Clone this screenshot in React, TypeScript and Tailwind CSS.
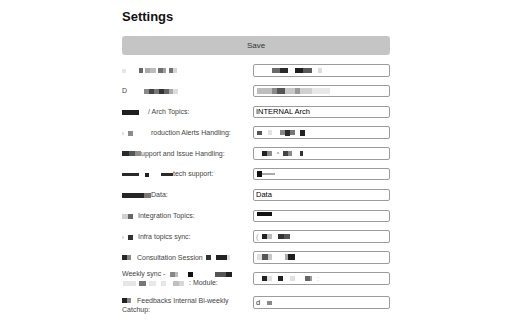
import React from "react";

type Seg = [number, number, string, number?];

// pixelated/redacted bits, given as absolute x ranges on the page
function Blots({ from, segs }: { from: number; segs: Seg[] }) {
  let x = from;
  return (
    <>
      {segs.map(([s, e, c, h], i) => {
        const ml = s - x;
        x = e;
        return (
          <span
            key={i}
            className="inline-block align-middle"
            style={{ width: e - s, height: h ?? 5, background: c, marginLeft: ml }}
          />
        );
      })}
    </>
  );
}

function Field({ className = "", children }: { className?: string; children?: React.ReactNode }) {
  return (
    <div
      className={
        "flex h-[12.5px] items-center overflow-hidden whitespace-nowrap rounded-[2px] border border-[#9c9c9c] bg-white pl-[2px] text-[7.5px] leading-none text-black " +
        className
      }
    >
      {children}
    </div>
  );
}

function Row({
  label,
  labelClass = "",
  fieldClass = "",
  children,
}: {
  label: React.ReactNode;
  labelClass?: string;
  fieldClass?: string;
  children?: React.ReactNode;
}) {
  return (
    <>
      <div className={"text-[7px] leading-[9.5px] text-[#444] " + labelClass}>{label}</div>
      <Field className={fieldClass}>{children}</Field>
    </>
  );
}

export default function App() {
  return (
    <div className="min-h-screen bg-white" style={{ fontFamily: '"Liberation Sans", Arial, sans-serif' }}>
      <div className="mx-auto w-[268px] pt-[9px]">
        <h1 className="text-[13px] font-bold leading-[15px] text-[#111]">Settings</h1>
        <button className="mt-[12px] flex h-[19px] w-full items-center justify-center rounded-[3px] bg-[#c5c5c5] text-[8px] font-normal text-[#333]">
          Save
        </button>
        <div className="mt-[9px] grid grid-cols-[120px_1fr] items-center gap-x-[11px] gap-y-[8.3px]">
          <Row
            label={
              <Blots
                from={121}
                segs={[
                  [121, 125, "#e6e6e6", 4],
                  [138, 142, "#666"],
                  [144, 149, "#aaa"],
                  [149, 155, "#bdbdbd"],
                  [157, 162, "#707070"],
                  [162, 165, "#a0a0a0"],
                  [168, 172, "#737373"],
                  [172, 176, "#d6d6d6"],
                ]}
              />
            }
          >
            <Blots
              from={254}
              segs={[
                [270, 278, "#6a6a6a"],
                [278, 286, "#2a2a2a"],
                [293, 301, "#1e1e1e"],
                [301, 310, "#5a5a5a"],
                [316, 320, "#dcdcdc"],
              ]}
            />
          </Row>
          <Row
            label={
              <>
                <span>D</span>
                <Blots
                  from={126}
                  segs={[
                    [143, 148, "#888"],
                    [148, 153, "#444"],
                    [153, 158, "#777"],
                    [158, 163, "#333"],
                    [163, 168, "#666"],
                    [168, 172, "#aaa"],
                    [172, 177, "#ddd"],
                  ]}
                />
              </>
            }
          >
            <Blots
              from={254}
              segs={[
                [255, 270, "#bdbdbd", 6],
                [270, 275, "#8a8a8a", 6],
                [275, 283, "#555", 6],
                [283, 293, "#c8c8c8", 6],
                [293, 298, "#999", 6],
                [298, 310, "#d0d0d0", 6],
                [310, 328, "#e8e8e8", 6],
              ]}
            />
          </Row>
          <Row
            label={
              <>
                <Blots from={121} segs={[[121, 138, "#1f1f1f"]]} />
                <span className="ml-[9px]">/ Arch Topics:</span>
              </>
            }
          >
            INTERNAL Arch
          </Row>
          <Row
            label={
              <>
                <Blots
                  from={121}
                  segs={[
                    [121, 123, "#e0e0e0", 3],
                    [127, 132, "#8c8c8c"],
                  ]}
                />
                <span className="ml-[18px]">roduction Alerts Handling:</span>
              </>
            }
          >
            <Blots
              from={254}
              segs={[
                [255, 260, "#555", 4],
                [266, 270, "#e2e2e2"],
                [278, 283, "#888"],
                [283, 288, "#2c2c2c", 6],
                [288, 293, "#777"],
                [298, 303, "#222", 6],
              ]}
            />
          </Row>
          <Row
            label={
              <>
                <Blots
                  from={121}
                  segs={[
                    [121, 128, "#2a2a2a"],
                    [128, 134, "#555"],
                    [134, 140, "#909090"],
                  ]}
                />
                <span>upport and Issue Handling:</span>
              </>
            }
          >
            <Blots
              from={254}
              segs={[
                [260, 265, "#222"],
                [265, 270, "#8a8a8a"],
                [275, 277, "#bbb", 2],
                [281, 286, "#444"],
                [286, 290, "#8a8a8a"],
                [298, 301, "#333"],
              ]}
            />
          </Row>
          <Row
            label={
              <>
                <Blots
                  from={121}
                  segs={[
                    [121, 138, "#2a2a2a", 3],
                    [144, 148, "#222", 4],
                    [160, 172, "#2a2a2a", 3],
                  ]}
                />
                <span>tech support:</span>
              </>
            }
          >
            <Blots
              from={254}
              segs={[
                [255, 260, "#111", 6],
                [260, 273, "#aaa", 2],
              ]}
            />
          </Row>
          <Row
            label={
              <>
                <Blots
                  from={121}
                  segs={[
                    [121, 143, "#262626"],
                    [143, 150, "#777"],
                  ]}
                />
                <span>Data:</span>
              </>
            }
          >
            Data
          </Row>
          <Row
            label={
              <>
                <Blots
                  from={121}
                  segs={[
                    [121, 127, "#cfcfcf"],
                    [127, 132, "#666"],
                  ]}
                />
                <span className="ml-[5px]">Integration Topics:</span>
              </>
            }
          >
            <span className="-mt-[3px] ml-[1px] inline-block h-[4px] w-[15px] bg-[#111]" />
          </Row>
          <Row
            label={
              <>
                <Blots
                  from={121}
                  segs={[
                    [121, 123, "#ddd", 3],
                    [127, 132, "#333"],
                  ]}
                />
                <span className="ml-[5px]">Infra topics sync:</span>
              </>
            }
          >
            <span className="text-[#999]">(</span>
            <Blots
              from={257}
              segs={[
                [260, 265, "#222"],
                [265, 270, "#bbb"],
                [276, 282, "#333"],
                [282, 288, "#555"],
              ]}
            />
          </Row>
          <Row
            label={
              <>
                <Blots
                  from={121}
                  segs={[
                    [121, 126, "#262626"],
                    [126, 130, "#888"],
                  ]}
                />
                <span className="ml-[6px]">Consultation Session</span>
                <Blots
                  from={202}
                  segs={[
                    [205, 210, "#333"],
                    [215, 226, "#222"],
                    [226, 229, "#ddd"],
                  ]}
                />
              </>
            }
          >
            <Blots
              from={254}
              segs={[
                [255, 260, "#e0e0e0", 6],
                [260, 266, "#555", 6],
                [266, 270, "#c8c8c8", 6],
                [283, 286, "#aaa", 6],
                [286, 293, "#1e1e1e", 6],
              ]}
            />
          </Row>
          <Row
            labelClass="-my-[3px]"
            label={
              <>
                <span>Weekly sync -</span>
                <Blots
                  from={165}
                  segs={[
                    [170, 175, "#888"],
                    [175, 178, "#bbb"],
                    [188, 193, "#111"],
                    [215, 226, "#555"],
                    [226, 232, "#222"],
                  ]}
                />
                <br />
                <Blots
                  from={121}
                  segs={[
                    [122, 135, "#e6e6e6"],
                    [138, 145, "#777"],
                    [148, 155, "#e8e8e8"],
                    [160, 165, "#e6e6e6"],
                    [172, 178, "#c0c0c0"],
                    [178, 183, "#d8d8d8"],
                  ]}
                />
                <span className="ml-[5px]">: Module:</span>
              </>
            }
          >
            <Blots
              from={254}
              segs={[
                [260, 265, "#222"],
                [265, 270, "#e0e0e0"],
                [276, 281, "#222"],
                [288, 293, "#e0e0e0"],
                [303, 308, "#666"],
                [308, 310, "#999"],
              ]}
            />
            <span className="ml-[5px] text-[#bbb]">:</span>
          </Row>
          <Row
            labelClass="self-start mt-[2.5px] leading-[9px]"
            fieldClass="self-start mt-[3px]"
            label={
              <>
                <Blots
                  from={121}
                  segs={[
                    [121, 126, "#222"],
                    [126, 130, "#888"],
                  ]}
                />
                <span className="ml-[6px]">Feedbacks Internal Bi-weekly</span>
                <br />
                Catchup:
              </>
            }
          >
            <span className="text-[#333]">d</span>
            <Blots from={258} segs={[[265, 270, "#8a8a8a", 4]]} />
          </Row>
        </div>
      </div>
    </div>
  );
}
